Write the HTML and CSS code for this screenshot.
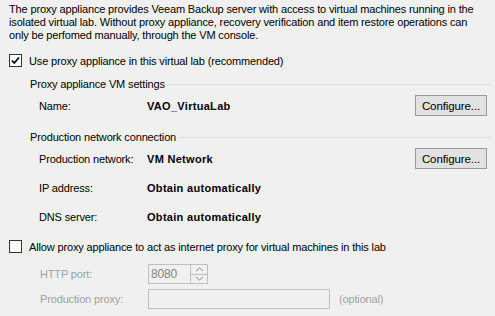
FILE: index.html
```html
<!DOCTYPE html>
<html lang="en">

<head>
  <meta charset="UTF-8">
  <title>Proxy Appliance</title>
  <link rel="stylesheet" href="styles.css">
</head>

<body>

  <div class="page">
    <p class="intro">
      The proxy appliance provides Veeam Backup server with access to virtual machines running in the<br>
      isolated virtual lab. Without proxy appliance, recovery verification and item restore operations can<br>
      only be perfomed manually, through the VM console.
    </p>

    <div class="check-row first">
      <span class="checkbox checked">
        <svg width="11" height="11" viewBox="0 0 11 11"><path d="M2 5.5 L4.3 8 L9 2.5" fill="none" stroke="#000" stroke-width="1.8"/></svg>
      </span>
      <span>Use proxy appliance in this virtual lab (recommended)</span>
    </div>

    <div class="group">
      <div class="group-head first"><span>Proxy appliance VM settings</span><span class="group-line"></span></div>
      <div class="row button-row first">
        <span class="label">Name:</span>
        <span class="value">VAO_VirtuaLab</span>
        <button class="btn">Configure...</button>
      </div>

      <div class="group-head second"><span>Production network connection</span><span class="group-line"></span></div>
      <div class="row button-row">
        <span class="label">Production network:</span>
        <span class="value">VM Network</span>
        <button class="btn">Configure...</button>
      </div>
      <div class="row text-row ip">
        <span class="label">IP address:</span>
        <span class="value">Obtain automatically</span>
      </div>
      <div class="row text-row dns">
        <span class="label">DNS server:</span>
        <span class="value">Obtain automatically</span>
      </div>
    </div>

    <div class="check-row second">
      <span class="checkbox"></span>
      <span>Allow proxy appliance to act as internet proxy for virtual machines in this lab</span>
    </div>

    <div class="proxy-fields">
      <div class="row field-row http">
        <span class="label disabled">HTTP port:</span>
        <span class="spin">
          <span class="spin-text">8080</span>
          <span class="spin-arrows">
            <span class="arrow"><svg width="9" height="5" viewBox="0 0 9 5"><path d="M1 4 L4.5 1 L8 4" fill="none" stroke="#8a8a8a" stroke-width="1"/></svg></span>
            <span class="arrow"><svg width="9" height="5" viewBox="0 0 9 5"><path d="M1 1 L4.5 4 L8 1" fill="none" stroke="#8a8a8a" stroke-width="1"/></svg></span>
          </span>
        </span>
      </div>
      <div class="row field-row proxy">
        <span class="label disabled">Production proxy:</span>
        <span class="textbox"></span>
        <span class="optional">(optional)</span>
      </div>
    </div>
  </div>

</body>

</html>
```

FILE: styles.css
```css
body {
  margin: 0;
  background-color: #f0f0f0;
  font-family: "Liberation Sans", Arial, sans-serif;
  font-size: 11px;
  letter-spacing: -0.15px;
  color: #000;
}

.page {
  width: 495px;
  height: 316px;
  overflow: hidden;
}

.intro {
  margin: 0;
  padding: 3px 0 0 9px;
  line-height: 13px;
  white-space: nowrap;
}

.check-row {
  display: flex;
  align-items: center;
  gap: 7px;
  height: 13px;
  padding-left: 9px;
}

.check-row.first {
  margin-top: 12px;
}

.check-row.second {
  margin-top: 17px;
}

.checkbox {
  box-sizing: border-box;
  width: 13px;
  height: 13px;
  border: 1px solid #333;
  background: #fff;
  display: flex;
  align-items: center;
  justify-content: center;
}

.group {
  padding-left: 30px;
  padding-right: 3px;
}

.group-head {
  display: flex;
  align-items: center;
  height: 12px;
  gap: 3px;
}

.group-head.first {
  margin-top: 11px;
}

.group-head.second {
  margin-top: 15px;
}

.group-line {
  flex: 1;
  height: 1px;
  background: #d5dfe5;
}

.row {
  display: flex;
  align-items: center;
  padding-left: 9px;
}

.label {
  width: 108px;
}

.value {
  font-weight: bold;
  letter-spacing: 0.3px;
  flex: 1;
}

.button-row {
  height: 21px;
  margin-top: 5px;
  padding-right: 5px;
}

.btn {
  box-sizing: border-box;
  width: 72px;
  height: 21px;
  padding: 0;
  background: #e1e1e1;
  border: 1px solid #999;
  font-family: inherit;
  font-size: 11.5px;
  letter-spacing: -0.1px;
  color: #000;
}

.text-row {
  height: 13px;
}

.text-row.ip {
  margin-top: 12px;
}

.text-row.dns {
  margin-top: 16px;
}

.proxy-fields {
  padding-left: 31px;
}

.field-row {
  height: 20px;
  padding-left: 9px;
}

.field-row.http {
  margin-top: 11px;
}

.field-row.proxy {
  margin-top: 5px;
}

.disabled {
  color: #a0a0a0;
}

.spin {
  box-sizing: border-box;
  width: 60px;
  height: 20px;
  border: 1px solid #bfbfbf;
  display: flex;
}

.spin-text {
  flex: 1;
  padding-left: 2px;
  line-height: 18px;
  color: #838383;
  font-size: 12px;
}

.spin-arrows {
  width: 16px;
  border-left: 1px solid #bfbfbf;
  display: flex;
  flex-direction: column;
}

.arrow {
  flex: 1;
  display: flex;
  align-items: center;
  justify-content: center;
}

.arrow + .arrow {
  border-top: 1px solid #bfbfbf;
}

.textbox {
  box-sizing: border-box;
  width: 182px;
  height: 20px;
  border: 1px solid #bfbfbf;
}

.optional {
  margin-left: 9px;
  color: #a0a0a0;
}
```
